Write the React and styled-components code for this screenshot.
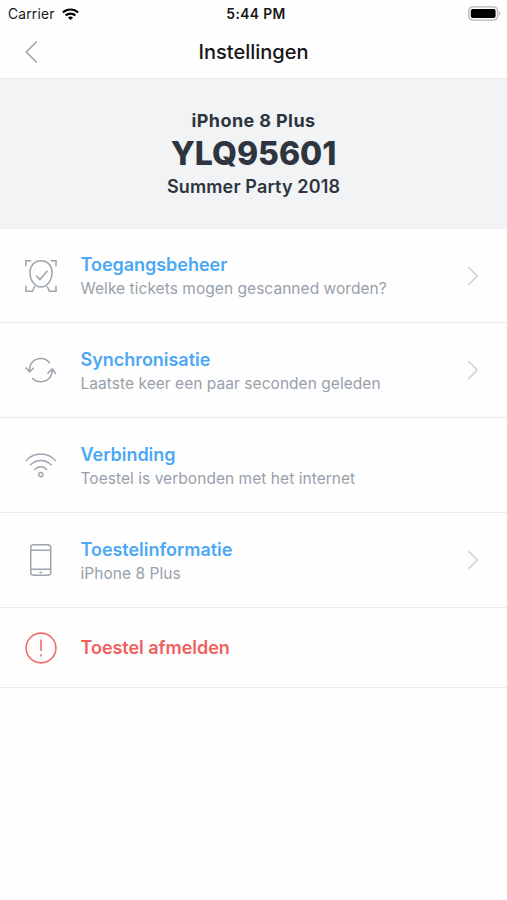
import React from "react";
import styled, { createGlobalStyle } from "styled-components";

const GlobalStyle = createGlobalStyle`
  * { box-sizing: border-box; }
  body { margin: 0; background: #fff; }
`;

const Screen = styled.main`
  width: 507px;
  height: 900px;
  overflow: hidden;
  background: #fefefe;
  font-family: Inter, "Liberation Sans", sans-serif;
  color: #161616;
`;

const StatusBar = styled.div`
  display: grid;
  grid-template-columns: 1fr auto 1fr;
  align-items: center;
  height: 26px;
  padding: 1px 6px 0 8px;
`;

const Carrier = styled.div`
  display: flex;
  align-items: center;
  gap: 7px;
  font-size: 13.8px;
  letter-spacing: 0.2px;
  line-height: 16px;
`;

const Clock = styled.time`
  font-size: 13.8px;
  font-weight: 600;
  letter-spacing: 0.4px;
  line-height: 16px;
  padding-left: 3px;
`;

const Battery = styled.svg`
  justify-self: end;
  display: block;
`;

const NavBar = styled.header`
  display: grid;
  grid-template-columns: 64px 1fr 64px;
  align-items: center;
  height: 53px;
  border-bottom: 1px solid #e9eaec;
`;

const BackButton = styled.button`
  display: flex;
  align-items: center;
  height: 52px;
  padding: 0 0 0 24px;
  border: 0;
  background: none;
`;

const NavTitle = styled.h1`
  margin: 0;
  font-size: 20px;
  font-weight: 500;
  line-height: 24px;
  text-align: center;
`;

const Hero = styled.section`
  height: 150px;
  padding-top: 30px;
  background: #f1f3f5;
  color: #2e353f;
  text-align: center;
`;

const DeviceName = styled.div`
  font-size: 18px;
  font-weight: 700;
  line-height: 24px;
  letter-spacing: 0.4px;
`;

const DeviceCode = styled.div`
  font-size: 32px;
  font-weight: 800;
  line-height: 42px;
`;

const EventName = styled.div`
  font-size: 18px;
  font-weight: 600;
  line-height: 24px;
  letter-spacing: 0.14px;
`;

const List = styled.ul`
  margin: 0;
  padding: 0;
  list-style: none;
`;

const Row = styled.li`
  display: grid;
  grid-template-columns: 32px 1fr 12px;
  column-gap: 24px;
  align-items: center;
  height: ${(p) => (p.$compact ? 80 : 95)}px;
  padding: 0 28px 0 24.5px;
  border-bottom: 1px solid #ebecee;

  &:first-child { height: 94px; }
`;

const RowText = styled.div`
  white-space: nowrap;
`;

const RowTitle = styled.div`
  color: ${(p) => (p.$danger ? "#f1605f" : "#4ca8f5")};
  font-size: 18px;
  font-weight: 600;
  line-height: 24px;
  letter-spacing: -0.03px;
`;

const RowDetail = styled.div`
  color: #98a1ab;
  font-size: 15.5px;
  line-height: 20px;
  padding-top: 2px;
  height: 21px;
  letter-spacing: 0.045px;
`;

const LineIcon = styled.svg`
  display: block;
  overflow: visible;
  fill: none;
  stroke: ${(p) => p.$color || "#9ca5ae"};
  stroke-width: ${(p) => p.$weight || 1.3};
`;

const AccessIcon = () => (
  <LineIcon width="32" height="32" viewBox="0 0 32 32" $weight={1.5}>
    <path d="M.9 6.200V.8h5.300M25.700.8H31v5.400M.9 25.800v5.400h6.600l2.200-5M31 25.800v5.400h-6.600l-2.200-5" />
    <path d="M16 .8C9.500.8 5 5.500 5 12.200 5 20.300 9.700 27 16 27s11-6.700 11-14.800C27 5.500 22.500.8 16 .8Z" />
    <path d="m11.300 15.600 3.500 4 7.700-8.800" />
  </LineIcon>
);

const SyncIcon = () => (
  <LineIcon width="32" height="32" viewBox="0 0 32 32" $weight={1.5}>
    <path d="M4.500 17.400C4 9.600 9.200 4.600 15.900 4.600c3.600 0 6.600 1.500 8.800 4.600M.6 13.400l3.900 4.500 4.300-4.200" />
    <path d="M27.200 15.200c.5 7.200-4.700 12.500-11.400 12.500-3.600 0-6.600-1.500-8.500-3.800M31 20l-3.800-5-4.700 4.600" />
  </LineIcon>
);

const WifiIcon = () => (
  <LineIcon width="32" height="32" viewBox="0 0 32 32" $weight={1.4}>
    <path d="M.8 12c8.100-9.300 22-9.300 30 0M5.100 16.300c5.700-6.500 15.700-6.500 21.400 0M9.500 20.900c3.500-4.200 9.200-4.200 12.600 0" />
    <circle cx="15.800" cy="25.600" r="2.100" />
  </LineIcon>
);

const PhoneIcon = () => (
  <LineIcon width="32" height="32" viewBox="0 0 32 32" $weight={1.5}>
    <rect x="5.700" y=".8" width="20" height="30.400" rx="3" />
    <path d="M5.700 6.300h20M5.700 25.300h20M14.400 28.500h2.800" />
  </LineIcon>
);

const AlertIcon = () => (
  <LineIcon width="32" height="32" viewBox="0 0 32 32" $color="#ee6c6b" $weight={1.6}>
    <circle cx="16" cy="16" r="14.900" />
    <path d="M16 7.500v11.600M16 22.200v2.200" />
  </LineIcon>
);

const Chevron = () => (
  <LineIcon width="12" height="20" viewBox="0 0 12 20" $color="#d0d3d6" $weight={1.6}>
    <path d="m1.300 1.100 9 8.900-9 8.900" />
  </LineIcon>
);

const rows = [
  { Icon: AccessIcon, title: "Toegangsbeheer", detail: "Welke tickets mogen gescanned worden?", link: true },
  { Icon: SyncIcon, title: "Synchronisatie", detail: "Laatste keer een paar seconden geleden", link: true },
  { Icon: WifiIcon, title: "Verbinding", detail: "Toestel is verbonden met het internet" },
  { Icon: PhoneIcon, title: "Toestelinformatie", detail: "iPhone 8 Plus", link: true },
  { Icon: AlertIcon, title: "Toestel afmelden", danger: true },
];

export default function App() {
  return (
    <Screen>
      <GlobalStyle />
      <StatusBar>
        <Carrier>
          Carrier
          <svg width="17" height="12" viewBox="0 0 17 12" fill="none" stroke="#000" strokeWidth="2.200">
            <path d="M.9 4.500c4.300-4 10.900-4 15.200 0M3.600 7.400c2.800-2.500 7-2.500 9.800 0" />
            <path d="M5.900 9.500c1.500-1.300 3.700-1.300 5.200 0L8.500 12Z" fill="#000" stroke="none" />
          </svg>
        </Carrier>
        <Clock>5:44 PM</Clock>
        <Battery width="33" height="15" viewBox="0 0 33 15">
          <rect x=".8" y=".9" width="28.800" height="13.200" rx="4" fill="none" stroke="#b4b4b4" strokeWidth="1.300" />
          <rect x="2.800" y="2.900" width="24.800" height="9.200" rx="2" />
          <path d="M31 5.400c1.700.6 1.700 3.600 0 4.200Z" fill="#b4b4b4" />
        </Battery>
      </StatusBar>
      <NavBar>
        <BackButton aria-label="Terug">
          <LineIcon width="14" height="24" viewBox="0 0 14 24" $color="#9caab6" $weight={1.7}>
            <path d="M13 1.500 2.200 12 13 22.500" />
          </LineIcon>
        </BackButton>
        <NavTitle>Instellingen</NavTitle>
      </NavBar>
      <Hero>
        <DeviceName>iPhone 8 Plus</DeviceName>
        <DeviceCode>YLQ95601</DeviceCode>
        <EventName>Summer Party 2018</EventName>
      </Hero>
      <List>
        {rows.map(({ Icon, title, detail, link, danger }) => (
          <Row key={title} $compact={danger}>
            <Icon />
            <RowText>
              <RowTitle $danger={danger}>{title}</RowTitle>
              {detail && <RowDetail>{detail}</RowDetail>}
            </RowText>
            {link && <Chevron />}
          </Row>
        ))}
      </List>
    </Screen>
  );
}
